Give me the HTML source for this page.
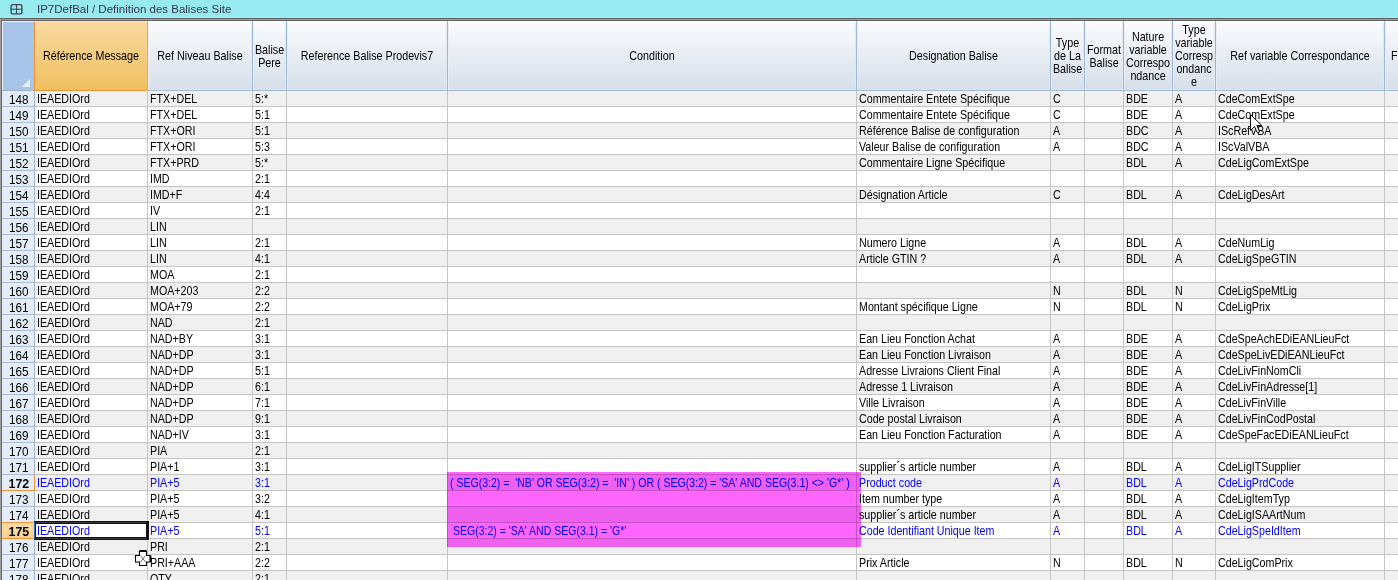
<!DOCTYPE html><html><head><meta charset="utf-8"><style>
*{margin:0;padding:0;box-sizing:border-box}
html,body{width:1398px;height:580px;overflow:hidden;background:#fff}
body{position:relative;font-family:"Liberation Sans",sans-serif;font-size:13px;color:#000}
div{position:absolute}
.t{white-space:pre;line-height:15px;height:15px;transform-origin:0 0;transform:scaleX(0.822)}
.h{white-space:nowrap;text-align:center;line-height:13px;transform:scaleX(0.825);transform-origin:50% 50%;display:flex;align-items:center;justify-content:center}
.hc{background:linear-gradient(#fafbfd,#d6dfea);box-shadow:inset 1px 0 0 #eaeef4,inset -1px 0 0 #e3e8ef,inset 0 -1px 0 #dce6ea}
.gv{width:1px;background:#c5c5c5}
.gh{height:1px;background:#c5c5c5}
.b{color:#0000ff}
</style></head><body>

<div style="left:0;top:0;width:1398px;height:18px;background:#97eaf0"></div>
<div style="left:0;top:17px;width:1398px;height:1px;background:#9cf3f8"></div>
<svg style="position:absolute;left:10px;top:4px" width="13" height="11" viewBox="0 0 13 11"><rect x="1.1" y="0.7" width="10.8" height="9.2" rx="1.6" fill="none" stroke="#3d4552" stroke-width="1.3"/><rect x="6" y="0.5" width="1" height="9.6" fill="#3d4552"/><rect x="0.6" y="4.7" width="11.8" height="1" fill="#3d4552"/></svg>
<div style="left:37px;top:-0.5px;height:18px;line-height:18px;font-size:11.5px;color:#35344a;white-space:pre;transform-origin:0 0;transform:scaleX(1.0)">IP7DefBal / Definition des Balises Site</div>
<div style="left:0;top:18px;width:1398px;height:1px;background:#5c5a5a"></div>
<div style="left:0;top:19px;width:1398px;height:561px;background:#a0a0a0"></div>
<div style="left:1px;top:20px;width:1397px;height:560px;background:#646464"></div>
<div style="left:2px;top:21px;width:1396px;height:559px;background:#fff"></div>
<div style="left:2px;top:21px;width:32px;height:69px;background:#a9c4e9;border-top:1px solid #eef4fc;border-left:1px solid #eef4fc"></div>
<div style="left:2px;top:90px;width:32px;height:1px;background:#9db3cc"></div>
<svg style="position:absolute;left:22px;top:79px" width="9" height="9"><polygon points="0,8 8,8 8,0" fill="#e9eff8"/></svg>
<div style="left:34px;top:21px;width:113px;height:69px;background:linear-gradient(#f8d9a0,#f1c060);border-left:1px solid #f29436;border-top:1px solid #fbe6bf"></div>
<div style="left:34px;top:90px;width:113px;height:1px;background:#f29436"></div>
<div style="left:147px;top:21px;width:1px;height:70px;background:#9db8d6"></div>
<div class="h" style="left:25px;top:21px;width:132px;height:69px">Référence Message</div>
<div class="hc" style="left:148px;top:21px;width:104px;height:69px;border-top:1px solid #fff"></div>
<div style="left:148px;top:90px;width:104px;height:1px;background:#a6bcd6"></div>
<div style="left:252px;top:21px;width:1px;height:70px;background:#9db8d6"></div>
<div class="h" style="left:138px;top:21px;width:124px;height:69px">Ref Niveau Balise</div>
<div class="hc" style="left:253px;top:21px;width:33px;height:69px;border-top:1px solid #fff"></div>
<div style="left:253px;top:90px;width:33px;height:1px;background:#a6bcd6"></div>
<div style="left:286px;top:21px;width:1px;height:70px;background:#9db8d6"></div>
<div class="h" style="left:243px;top:21px;width:53px;height:69px">Balise<br>Pere</div>
<div class="hc" style="left:287px;top:21px;width:160px;height:69px;border-top:1px solid #fff"></div>
<div style="left:287px;top:90px;width:160px;height:1px;background:#a6bcd6"></div>
<div style="left:447px;top:21px;width:1px;height:70px;background:#9db8d6"></div>
<div class="h" style="left:277px;top:21px;width:180px;height:69px">Reference Balise Prodevis7</div>
<div class="hc" style="left:448px;top:21px;width:408px;height:69px;border-top:1px solid #fff"></div>
<div style="left:448px;top:90px;width:408px;height:1px;background:#a6bcd6"></div>
<div style="left:856px;top:21px;width:1px;height:70px;background:#9db8d6"></div>
<div class="h" style="left:438px;top:21px;width:428px;height:69px">Condition</div>
<div class="hc" style="left:857px;top:21px;width:193px;height:69px;border-top:1px solid #fff"></div>
<div style="left:857px;top:90px;width:193px;height:1px;background:#a6bcd6"></div>
<div style="left:1050px;top:21px;width:1px;height:70px;background:#9db8d6"></div>
<div class="h" style="left:847px;top:21px;width:213px;height:69px">Designation Balise</div>
<div class="hc" style="left:1051px;top:21px;width:33px;height:69px;border-top:1px solid #fff"></div>
<div style="left:1051px;top:90px;width:33px;height:1px;background:#a6bcd6"></div>
<div style="left:1084px;top:21px;width:1px;height:70px;background:#9db8d6"></div>
<div class="h" style="left:1041px;top:21px;width:53px;height:69px">Type<br>de La<br>Balise</div>
<div class="hc" style="left:1085px;top:21px;width:38px;height:69px;border-top:1px solid #fff"></div>
<div style="left:1085px;top:90px;width:38px;height:1px;background:#a6bcd6"></div>
<div style="left:1123px;top:21px;width:1px;height:70px;background:#9db8d6"></div>
<div class="h" style="left:1075px;top:21px;width:58px;height:69px">Format<br>Balise</div>
<div class="hc" style="left:1124px;top:21px;width:48px;height:69px;border-top:1px solid #fff"></div>
<div style="left:1124px;top:90px;width:48px;height:1px;background:#a6bcd6"></div>
<div style="left:1172px;top:21px;width:1px;height:70px;background:#9db8d6"></div>
<div class="h" style="left:1114px;top:21px;width:68px;height:69px">Nature<br>variable<br>Correspo<br>ndance</div>
<div class="hc" style="left:1173px;top:21px;width:42px;height:69px;border-top:1px solid #fff"></div>
<div style="left:1173px;top:90px;width:42px;height:1px;background:#a6bcd6"></div>
<div style="left:1215px;top:21px;width:1px;height:70px;background:#9db8d6"></div>
<div class="h" style="left:1163px;top:21px;width:62px;height:69px">Type<br>variable<br>Corresp<br>ondanc<br>e</div>
<div class="hc" style="left:1216px;top:21px;width:168px;height:69px;border-top:1px solid #fff"></div>
<div style="left:1216px;top:90px;width:168px;height:1px;background:#a6bcd6"></div>
<div style="left:1384px;top:21px;width:1px;height:70px;background:#9db8d6"></div>
<div class="h" style="left:1206px;top:21px;width:188px;height:69px">Ref variable Correspondance</div>
<div class="hc" style="left:1385px;top:21px;width:115px;height:69px;border-top:1px solid #fff"></div>
<div style="left:1385px;top:90px;width:115px;height:1px;background:#a6bcd6"></div>
<div style="left:1500px;top:21px;width:1px;height:70px;background:#9db8d6"></div>
<div class="h" style="left:1375px;top:21px;width:135px;height:69px"></div>
<div class="t" style="left:1391px;top:48px">F</div>
<div style="left:35px;top:91px;width:1363px;height:15px;background:#f0f0f0"></div>
<div class="gh" style="left:35px;top:106px;width:1363px"></div>
<div style="left:2px;top:91px;width:32px;height:15px;background:#e4ecf7"></div>
<div style="left:2px;top:106px;width:32px;height:1px;background:#a9bed6"></div>
<div style="left:34px;top:91px;width:1px;height:16px;background:#9eb6ce"></div>
<div class="t" style="left:3px;top:92px;width:32px;text-align:center;transform:none;"><span style="display:inline-block;transform:scaleX(0.9)">148</span></div>
<div style="left:35px;top:107px;width:1363px;height:15px;background:#ffffff"></div>
<div class="gh" style="left:35px;top:122px;width:1363px"></div>
<div style="left:2px;top:107px;width:32px;height:15px;background:#e4ecf7"></div>
<div style="left:2px;top:122px;width:32px;height:1px;background:#a9bed6"></div>
<div style="left:34px;top:107px;width:1px;height:16px;background:#9eb6ce"></div>
<div class="t" style="left:3px;top:108px;width:32px;text-align:center;transform:none;"><span style="display:inline-block;transform:scaleX(0.9)">149</span></div>
<div style="left:35px;top:123px;width:1363px;height:15px;background:#f0f0f0"></div>
<div class="gh" style="left:35px;top:138px;width:1363px"></div>
<div style="left:2px;top:123px;width:32px;height:15px;background:#e4ecf7"></div>
<div style="left:2px;top:138px;width:32px;height:1px;background:#a9bed6"></div>
<div style="left:34px;top:123px;width:1px;height:16px;background:#9eb6ce"></div>
<div class="t" style="left:3px;top:124px;width:32px;text-align:center;transform:none;"><span style="display:inline-block;transform:scaleX(0.9)">150</span></div>
<div style="left:35px;top:139px;width:1363px;height:15px;background:#ffffff"></div>
<div class="gh" style="left:35px;top:154px;width:1363px"></div>
<div style="left:2px;top:139px;width:32px;height:15px;background:#e4ecf7"></div>
<div style="left:2px;top:154px;width:32px;height:1px;background:#a9bed6"></div>
<div style="left:34px;top:139px;width:1px;height:16px;background:#9eb6ce"></div>
<div class="t" style="left:3px;top:140px;width:32px;text-align:center;transform:none;"><span style="display:inline-block;transform:scaleX(0.9)">151</span></div>
<div style="left:35px;top:155px;width:1363px;height:15px;background:#f0f0f0"></div>
<div class="gh" style="left:35px;top:170px;width:1363px"></div>
<div style="left:2px;top:155px;width:32px;height:15px;background:#e4ecf7"></div>
<div style="left:2px;top:170px;width:32px;height:1px;background:#a9bed6"></div>
<div style="left:34px;top:155px;width:1px;height:16px;background:#9eb6ce"></div>
<div class="t" style="left:3px;top:156px;width:32px;text-align:center;transform:none;"><span style="display:inline-block;transform:scaleX(0.9)">152</span></div>
<div style="left:35px;top:171px;width:1363px;height:15px;background:#ffffff"></div>
<div class="gh" style="left:35px;top:186px;width:1363px"></div>
<div style="left:2px;top:171px;width:32px;height:15px;background:#e4ecf7"></div>
<div style="left:2px;top:186px;width:32px;height:1px;background:#a9bed6"></div>
<div style="left:34px;top:171px;width:1px;height:16px;background:#9eb6ce"></div>
<div class="t" style="left:3px;top:172px;width:32px;text-align:center;transform:none;"><span style="display:inline-block;transform:scaleX(0.9)">153</span></div>
<div style="left:35px;top:187px;width:1363px;height:15px;background:#f0f0f0"></div>
<div class="gh" style="left:35px;top:202px;width:1363px"></div>
<div style="left:2px;top:187px;width:32px;height:15px;background:#e4ecf7"></div>
<div style="left:2px;top:202px;width:32px;height:1px;background:#a9bed6"></div>
<div style="left:34px;top:187px;width:1px;height:16px;background:#9eb6ce"></div>
<div class="t" style="left:3px;top:188px;width:32px;text-align:center;transform:none;"><span style="display:inline-block;transform:scaleX(0.9)">154</span></div>
<div style="left:35px;top:203px;width:1363px;height:15px;background:#ffffff"></div>
<div class="gh" style="left:35px;top:218px;width:1363px"></div>
<div style="left:2px;top:203px;width:32px;height:15px;background:#e4ecf7"></div>
<div style="left:2px;top:218px;width:32px;height:1px;background:#a9bed6"></div>
<div style="left:34px;top:203px;width:1px;height:16px;background:#9eb6ce"></div>
<div class="t" style="left:3px;top:204px;width:32px;text-align:center;transform:none;"><span style="display:inline-block;transform:scaleX(0.9)">155</span></div>
<div style="left:35px;top:219px;width:1363px;height:15px;background:#f0f0f0"></div>
<div class="gh" style="left:35px;top:234px;width:1363px"></div>
<div style="left:2px;top:219px;width:32px;height:15px;background:#e4ecf7"></div>
<div style="left:2px;top:234px;width:32px;height:1px;background:#a9bed6"></div>
<div style="left:34px;top:219px;width:1px;height:16px;background:#9eb6ce"></div>
<div class="t" style="left:3px;top:220px;width:32px;text-align:center;transform:none;"><span style="display:inline-block;transform:scaleX(0.9)">156</span></div>
<div style="left:35px;top:235px;width:1363px;height:15px;background:#ffffff"></div>
<div class="gh" style="left:35px;top:250px;width:1363px"></div>
<div style="left:2px;top:235px;width:32px;height:15px;background:#e4ecf7"></div>
<div style="left:2px;top:250px;width:32px;height:1px;background:#a9bed6"></div>
<div style="left:34px;top:235px;width:1px;height:16px;background:#9eb6ce"></div>
<div class="t" style="left:3px;top:236px;width:32px;text-align:center;transform:none;"><span style="display:inline-block;transform:scaleX(0.9)">157</span></div>
<div style="left:35px;top:251px;width:1363px;height:15px;background:#f0f0f0"></div>
<div class="gh" style="left:35px;top:266px;width:1363px"></div>
<div style="left:2px;top:251px;width:32px;height:15px;background:#e4ecf7"></div>
<div style="left:2px;top:266px;width:32px;height:1px;background:#a9bed6"></div>
<div style="left:34px;top:251px;width:1px;height:16px;background:#9eb6ce"></div>
<div class="t" style="left:3px;top:252px;width:32px;text-align:center;transform:none;"><span style="display:inline-block;transform:scaleX(0.9)">158</span></div>
<div style="left:35px;top:267px;width:1363px;height:15px;background:#ffffff"></div>
<div class="gh" style="left:35px;top:282px;width:1363px"></div>
<div style="left:2px;top:267px;width:32px;height:15px;background:#e4ecf7"></div>
<div style="left:2px;top:282px;width:32px;height:1px;background:#a9bed6"></div>
<div style="left:34px;top:267px;width:1px;height:16px;background:#9eb6ce"></div>
<div class="t" style="left:3px;top:268px;width:32px;text-align:center;transform:none;"><span style="display:inline-block;transform:scaleX(0.9)">159</span></div>
<div style="left:35px;top:283px;width:1363px;height:15px;background:#f0f0f0"></div>
<div class="gh" style="left:35px;top:298px;width:1363px"></div>
<div style="left:2px;top:283px;width:32px;height:15px;background:#e4ecf7"></div>
<div style="left:2px;top:298px;width:32px;height:1px;background:#a9bed6"></div>
<div style="left:34px;top:283px;width:1px;height:16px;background:#9eb6ce"></div>
<div class="t" style="left:3px;top:284px;width:32px;text-align:center;transform:none;"><span style="display:inline-block;transform:scaleX(0.9)">160</span></div>
<div style="left:35px;top:299px;width:1363px;height:15px;background:#ffffff"></div>
<div class="gh" style="left:35px;top:314px;width:1363px"></div>
<div style="left:2px;top:299px;width:32px;height:15px;background:#e4ecf7"></div>
<div style="left:2px;top:314px;width:32px;height:1px;background:#a9bed6"></div>
<div style="left:34px;top:299px;width:1px;height:16px;background:#9eb6ce"></div>
<div class="t" style="left:3px;top:300px;width:32px;text-align:center;transform:none;"><span style="display:inline-block;transform:scaleX(0.9)">161</span></div>
<div style="left:35px;top:315px;width:1363px;height:15px;background:#f0f0f0"></div>
<div class="gh" style="left:35px;top:330px;width:1363px"></div>
<div style="left:2px;top:315px;width:32px;height:15px;background:#e4ecf7"></div>
<div style="left:2px;top:330px;width:32px;height:1px;background:#a9bed6"></div>
<div style="left:34px;top:315px;width:1px;height:16px;background:#9eb6ce"></div>
<div class="t" style="left:3px;top:316px;width:32px;text-align:center;transform:none;"><span style="display:inline-block;transform:scaleX(0.9)">162</span></div>
<div style="left:35px;top:331px;width:1363px;height:15px;background:#ffffff"></div>
<div class="gh" style="left:35px;top:346px;width:1363px"></div>
<div style="left:2px;top:331px;width:32px;height:15px;background:#e4ecf7"></div>
<div style="left:2px;top:346px;width:32px;height:1px;background:#a9bed6"></div>
<div style="left:34px;top:331px;width:1px;height:16px;background:#9eb6ce"></div>
<div class="t" style="left:3px;top:332px;width:32px;text-align:center;transform:none;"><span style="display:inline-block;transform:scaleX(0.9)">163</span></div>
<div style="left:35px;top:347px;width:1363px;height:15px;background:#f0f0f0"></div>
<div class="gh" style="left:35px;top:362px;width:1363px"></div>
<div style="left:2px;top:347px;width:32px;height:15px;background:#e4ecf7"></div>
<div style="left:2px;top:362px;width:32px;height:1px;background:#a9bed6"></div>
<div style="left:34px;top:347px;width:1px;height:16px;background:#9eb6ce"></div>
<div class="t" style="left:3px;top:348px;width:32px;text-align:center;transform:none;"><span style="display:inline-block;transform:scaleX(0.9)">164</span></div>
<div style="left:35px;top:363px;width:1363px;height:15px;background:#ffffff"></div>
<div class="gh" style="left:35px;top:378px;width:1363px"></div>
<div style="left:2px;top:363px;width:32px;height:15px;background:#e4ecf7"></div>
<div style="left:2px;top:378px;width:32px;height:1px;background:#a9bed6"></div>
<div style="left:34px;top:363px;width:1px;height:16px;background:#9eb6ce"></div>
<div class="t" style="left:3px;top:364px;width:32px;text-align:center;transform:none;"><span style="display:inline-block;transform:scaleX(0.9)">165</span></div>
<div style="left:35px;top:379px;width:1363px;height:15px;background:#f0f0f0"></div>
<div class="gh" style="left:35px;top:394px;width:1363px"></div>
<div style="left:2px;top:379px;width:32px;height:15px;background:#e4ecf7"></div>
<div style="left:2px;top:394px;width:32px;height:1px;background:#a9bed6"></div>
<div style="left:34px;top:379px;width:1px;height:16px;background:#9eb6ce"></div>
<div class="t" style="left:3px;top:380px;width:32px;text-align:center;transform:none;"><span style="display:inline-block;transform:scaleX(0.9)">166</span></div>
<div style="left:35px;top:395px;width:1363px;height:15px;background:#ffffff"></div>
<div class="gh" style="left:35px;top:410px;width:1363px"></div>
<div style="left:2px;top:395px;width:32px;height:15px;background:#e4ecf7"></div>
<div style="left:2px;top:410px;width:32px;height:1px;background:#a9bed6"></div>
<div style="left:34px;top:395px;width:1px;height:16px;background:#9eb6ce"></div>
<div class="t" style="left:3px;top:396px;width:32px;text-align:center;transform:none;"><span style="display:inline-block;transform:scaleX(0.9)">167</span></div>
<div style="left:35px;top:411px;width:1363px;height:15px;background:#f0f0f0"></div>
<div class="gh" style="left:35px;top:426px;width:1363px"></div>
<div style="left:2px;top:411px;width:32px;height:15px;background:#e4ecf7"></div>
<div style="left:2px;top:426px;width:32px;height:1px;background:#a9bed6"></div>
<div style="left:34px;top:411px;width:1px;height:16px;background:#9eb6ce"></div>
<div class="t" style="left:3px;top:412px;width:32px;text-align:center;transform:none;"><span style="display:inline-block;transform:scaleX(0.9)">168</span></div>
<div style="left:35px;top:427px;width:1363px;height:15px;background:#ffffff"></div>
<div class="gh" style="left:35px;top:442px;width:1363px"></div>
<div style="left:2px;top:427px;width:32px;height:15px;background:#e4ecf7"></div>
<div style="left:2px;top:442px;width:32px;height:1px;background:#a9bed6"></div>
<div style="left:34px;top:427px;width:1px;height:16px;background:#9eb6ce"></div>
<div class="t" style="left:3px;top:428px;width:32px;text-align:center;transform:none;"><span style="display:inline-block;transform:scaleX(0.9)">169</span></div>
<div style="left:35px;top:443px;width:1363px;height:15px;background:#f0f0f0"></div>
<div class="gh" style="left:35px;top:458px;width:1363px"></div>
<div style="left:2px;top:443px;width:32px;height:15px;background:#e4ecf7"></div>
<div style="left:2px;top:458px;width:32px;height:1px;background:#a9bed6"></div>
<div style="left:34px;top:443px;width:1px;height:16px;background:#9eb6ce"></div>
<div class="t" style="left:3px;top:444px;width:32px;text-align:center;transform:none;"><span style="display:inline-block;transform:scaleX(0.9)">170</span></div>
<div style="left:35px;top:459px;width:1363px;height:15px;background:#ffffff"></div>
<div class="gh" style="left:35px;top:474px;width:1363px"></div>
<div style="left:2px;top:459px;width:32px;height:15px;background:#e4ecf7"></div>
<div style="left:2px;top:474px;width:32px;height:1px;background:#a9bed6"></div>
<div style="left:34px;top:459px;width:1px;height:16px;background:#9eb6ce"></div>
<div class="t" style="left:3px;top:460px;width:32px;text-align:center;transform:none;"><span style="display:inline-block;transform:scaleX(0.9)">171</span></div>
<div style="left:35px;top:475px;width:1363px;height:15px;background:#f0f0f0"></div>
<div class="gh" style="left:35px;top:490px;width:1363px"></div>
<div style="left:2px;top:475px;width:32px;height:15px;background:#e4ecf7"></div>
<div style="left:2px;top:490px;width:32px;height:1px;background:#f29436"></div>
<div style="left:34px;top:475px;width:1px;height:16px;background:#f29436"></div>
<div class="t" style="left:3px;top:476px;width:32px;text-align:center;transform:none;font-weight:bold;"><span style="display:inline-block;transform:scaleX(0.95)">172</span></div>
<div style="left:35px;top:491px;width:1363px;height:15px;background:#ffffff"></div>
<div class="gh" style="left:35px;top:506px;width:1363px"></div>
<div style="left:2px;top:491px;width:32px;height:15px;background:#e4ecf7"></div>
<div style="left:2px;top:506px;width:32px;height:1px;background:#a9bed6"></div>
<div style="left:34px;top:491px;width:1px;height:16px;background:#9eb6ce"></div>
<div class="t" style="left:3px;top:492px;width:32px;text-align:center;transform:none;"><span style="display:inline-block;transform:scaleX(0.9)">173</span></div>
<div style="left:35px;top:507px;width:1363px;height:15px;background:#f0f0f0"></div>
<div class="gh" style="left:35px;top:522px;width:1363px"></div>
<div style="left:2px;top:507px;width:32px;height:15px;background:#e4ecf7"></div>
<div style="left:2px;top:522px;width:32px;height:1px;background:#f29436"></div>
<div style="left:34px;top:507px;width:1px;height:16px;background:#9eb6ce"></div>
<div class="t" style="left:3px;top:508px;width:32px;text-align:center;transform:none;"><span style="display:inline-block;transform:scaleX(0.9)">174</span></div>
<div style="left:35px;top:523px;width:1363px;height:15px;background:#ffffff"></div>
<div class="gh" style="left:35px;top:538px;width:1363px"></div>
<div style="left:2px;top:523px;width:32px;height:15px;background:linear-gradient(#fadba6,#f8d192)"></div>
<div style="left:2px;top:538px;width:32px;height:1px;background:#f29436"></div>
<div style="left:34px;top:523px;width:1px;height:16px;background:#f29436"></div>
<div class="t" style="left:3px;top:524px;width:32px;text-align:center;transform:none;font-weight:bold;"><span style="display:inline-block;transform:scaleX(0.95)">175</span></div>
<div style="left:35px;top:539px;width:1363px;height:15px;background:#f0f0f0"></div>
<div class="gh" style="left:35px;top:554px;width:1363px"></div>
<div style="left:2px;top:539px;width:32px;height:15px;background:#e4ecf7"></div>
<div style="left:2px;top:554px;width:32px;height:1px;background:#a9bed6"></div>
<div style="left:34px;top:539px;width:1px;height:16px;background:#9eb6ce"></div>
<div class="t" style="left:3px;top:540px;width:32px;text-align:center;transform:none;"><span style="display:inline-block;transform:scaleX(0.9)">176</span></div>
<div style="left:35px;top:555px;width:1363px;height:15px;background:#ffffff"></div>
<div class="gh" style="left:35px;top:570px;width:1363px"></div>
<div style="left:2px;top:555px;width:32px;height:15px;background:#e4ecf7"></div>
<div style="left:2px;top:570px;width:32px;height:1px;background:#a9bed6"></div>
<div style="left:34px;top:555px;width:1px;height:16px;background:#9eb6ce"></div>
<div class="t" style="left:3px;top:556px;width:32px;text-align:center;transform:none;"><span style="display:inline-block;transform:scaleX(0.9)">177</span></div>
<div style="left:35px;top:571px;width:1363px;height:15px;background:#f0f0f0"></div>
<div class="gh" style="left:35px;top:586px;width:1363px"></div>
<div style="left:2px;top:571px;width:32px;height:15px;background:#e4ecf7"></div>
<div style="left:2px;top:586px;width:32px;height:1px;background:#a9bed6"></div>
<div style="left:34px;top:571px;width:1px;height:16px;background:#9eb6ce"></div>
<div class="t" style="left:3px;top:572px;width:32px;text-align:center;transform:none;"><span style="display:inline-block;transform:scaleX(0.9)">178</span></div>
<div class="gv" style="left:147px;top:91px;height:489px"></div>
<div class="gv" style="left:252px;top:91px;height:489px"></div>
<div class="gv" style="left:286px;top:91px;height:489px"></div>
<div class="gv" style="left:447px;top:91px;height:489px"></div>
<div class="gv" style="left:856px;top:91px;height:489px"></div>
<div class="gv" style="left:1050px;top:91px;height:489px"></div>
<div class="gv" style="left:1084px;top:91px;height:489px"></div>
<div class="gv" style="left:1123px;top:91px;height:489px"></div>
<div class="gv" style="left:1172px;top:91px;height:489px"></div>
<div class="gv" style="left:1215px;top:91px;height:489px"></div>
<div class="gv" style="left:1384px;top:91px;height:489px"></div>
<div style="left:447px;top:472px;width:414px;height:75px;background:#ff66ff;mix-blend-mode:multiply"></div>
<div class="t" style="left:37px;top:91px;">IEAEDIOrd</div>
<div class="t" style="left:150px;top:91px;">FTX+DEL</div>
<div class="t" style="left:255px;top:91px;">5:*</div>
<div class="t" style="left:859px;top:91px;">Commentaire Entete Spécifique</div>
<div class="t" style="left:1053px;top:91px;">C</div>
<div class="t" style="left:1126px;top:91px;">BDE</div>
<div class="t" style="left:1175px;top:91px;">A</div>
<div class="t" style="left:1218px;top:91px;">CdeComExtSpe</div>
<div class="t" style="left:37px;top:107px;">IEAEDIOrd</div>
<div class="t" style="left:150px;top:107px;">FTX+DEL</div>
<div class="t" style="left:255px;top:107px;">5:1</div>
<div class="t" style="left:859px;top:107px;">Commentaire Entete Spécifique</div>
<div class="t" style="left:1053px;top:107px;">C</div>
<div class="t" style="left:1126px;top:107px;">BDE</div>
<div class="t" style="left:1175px;top:107px;">A</div>
<div class="t" style="left:1218px;top:107px;">CdeComExtSpe</div>
<div class="t" style="left:37px;top:123px;">IEAEDIOrd</div>
<div class="t" style="left:150px;top:123px;">FTX+ORI</div>
<div class="t" style="left:255px;top:123px;">5:1</div>
<div class="t" style="left:859px;top:123px;">Référence Balise de configuration</div>
<div class="t" style="left:1053px;top:123px;">A</div>
<div class="t" style="left:1126px;top:123px;">BDC</div>
<div class="t" style="left:1175px;top:123px;">A</div>
<div class="t" style="left:1218px;top:123px;">IScRefVBA</div>
<div class="t" style="left:37px;top:139px;">IEAEDIOrd</div>
<div class="t" style="left:150px;top:139px;">FTX+ORI</div>
<div class="t" style="left:255px;top:139px;">5:3</div>
<div class="t" style="left:859px;top:139px;">Valeur Balise de configuration</div>
<div class="t" style="left:1053px;top:139px;">A</div>
<div class="t" style="left:1126px;top:139px;">BDC</div>
<div class="t" style="left:1175px;top:139px;">A</div>
<div class="t" style="left:1218px;top:139px;">IScValVBA</div>
<div class="t" style="left:37px;top:155px;">IEAEDIOrd</div>
<div class="t" style="left:150px;top:155px;">FTX+PRD</div>
<div class="t" style="left:255px;top:155px;">5:*</div>
<div class="t" style="left:859px;top:155px;">Commentaire Ligne Spécifique</div>
<div class="t" style="left:1126px;top:155px;">BDL</div>
<div class="t" style="left:1175px;top:155px;">A</div>
<div class="t" style="left:1218px;top:155px;">CdeLigComExtSpe</div>
<div class="t" style="left:37px;top:171px;">IEAEDIOrd</div>
<div class="t" style="left:150px;top:171px;">IMD</div>
<div class="t" style="left:255px;top:171px;">2:1</div>
<div class="t" style="left:37px;top:187px;">IEAEDIOrd</div>
<div class="t" style="left:150px;top:187px;">IMD+F</div>
<div class="t" style="left:255px;top:187px;">4:4</div>
<div class="t" style="left:859px;top:187px;">Désignation Article</div>
<div class="t" style="left:1053px;top:187px;">C</div>
<div class="t" style="left:1126px;top:187px;">BDL</div>
<div class="t" style="left:1175px;top:187px;">A</div>
<div class="t" style="left:1218px;top:187px;">CdeLigDesArt</div>
<div class="t" style="left:37px;top:203px;">IEAEDIOrd</div>
<div class="t" style="left:150px;top:203px;">IV</div>
<div class="t" style="left:255px;top:203px;">2:1</div>
<div class="t" style="left:37px;top:219px;">IEAEDIOrd</div>
<div class="t" style="left:150px;top:219px;">LIN</div>
<div class="t" style="left:37px;top:235px;">IEAEDIOrd</div>
<div class="t" style="left:150px;top:235px;">LIN</div>
<div class="t" style="left:255px;top:235px;">2:1</div>
<div class="t" style="left:859px;top:235px;">Numero Ligne</div>
<div class="t" style="left:1053px;top:235px;">A</div>
<div class="t" style="left:1126px;top:235px;">BDL</div>
<div class="t" style="left:1175px;top:235px;">A</div>
<div class="t" style="left:1218px;top:235px;">CdeNumLig</div>
<div class="t" style="left:37px;top:251px;">IEAEDIOrd</div>
<div class="t" style="left:150px;top:251px;">LIN</div>
<div class="t" style="left:255px;top:251px;">4:1</div>
<div class="t" style="left:859px;top:251px;">Article GTIN ?</div>
<div class="t" style="left:1053px;top:251px;">A</div>
<div class="t" style="left:1126px;top:251px;">BDL</div>
<div class="t" style="left:1175px;top:251px;">A</div>
<div class="t" style="left:1218px;top:251px;">CdeLigSpeGTIN</div>
<div class="t" style="left:37px;top:267px;">IEAEDIOrd</div>
<div class="t" style="left:150px;top:267px;">MOA</div>
<div class="t" style="left:255px;top:267px;">2:1</div>
<div class="t" style="left:37px;top:283px;">IEAEDIOrd</div>
<div class="t" style="left:150px;top:283px;">MOA+203</div>
<div class="t" style="left:255px;top:283px;">2:2</div>
<div class="t" style="left:1053px;top:283px;">N</div>
<div class="t" style="left:1126px;top:283px;">BDL</div>
<div class="t" style="left:1175px;top:283px;">N</div>
<div class="t" style="left:1218px;top:283px;">CdeLigSpeMtLig</div>
<div class="t" style="left:37px;top:299px;">IEAEDIOrd</div>
<div class="t" style="left:150px;top:299px;">MOA+79</div>
<div class="t" style="left:255px;top:299px;">2:2</div>
<div class="t" style="left:859px;top:299px;">Montant spécifique Ligne</div>
<div class="t" style="left:1053px;top:299px;">N</div>
<div class="t" style="left:1126px;top:299px;">BDL</div>
<div class="t" style="left:1175px;top:299px;">N</div>
<div class="t" style="left:1218px;top:299px;">CdeLigPrix</div>
<div class="t" style="left:37px;top:315px;">IEAEDIOrd</div>
<div class="t" style="left:150px;top:315px;">NAD</div>
<div class="t" style="left:255px;top:315px;">2:1</div>
<div class="t" style="left:37px;top:331px;">IEAEDIOrd</div>
<div class="t" style="left:150px;top:331px;">NAD+BY</div>
<div class="t" style="left:255px;top:331px;">3:1</div>
<div class="t" style="left:859px;top:331px;">Ean Lieu Fonction Achat</div>
<div class="t" style="left:1053px;top:331px;">A</div>
<div class="t" style="left:1126px;top:331px;">BDE</div>
<div class="t" style="left:1175px;top:331px;">A</div>
<div class="t" style="left:1218px;top:331px;">CdeSpeAchEDiEANLieuFct</div>
<div class="t" style="left:37px;top:347px;">IEAEDIOrd</div>
<div class="t" style="left:150px;top:347px;">NAD+DP</div>
<div class="t" style="left:255px;top:347px;">3:1</div>
<div class="t" style="left:859px;top:347px;">Ean Lieu Fonction Livraison</div>
<div class="t" style="left:1053px;top:347px;">A</div>
<div class="t" style="left:1126px;top:347px;">BDE</div>
<div class="t" style="left:1175px;top:347px;">A</div>
<div class="t" style="left:1218px;top:347px;">CdeSpeLivEDiEANLieuFct</div>
<div class="t" style="left:37px;top:363px;">IEAEDIOrd</div>
<div class="t" style="left:150px;top:363px;">NAD+DP</div>
<div class="t" style="left:255px;top:363px;">5:1</div>
<div class="t" style="left:859px;top:363px;">Adresse Livraions Client Final</div>
<div class="t" style="left:1053px;top:363px;">A</div>
<div class="t" style="left:1126px;top:363px;">BDE</div>
<div class="t" style="left:1175px;top:363px;">A</div>
<div class="t" style="left:1218px;top:363px;">CdeLivFinNomCli</div>
<div class="t" style="left:37px;top:379px;">IEAEDIOrd</div>
<div class="t" style="left:150px;top:379px;">NAD+DP</div>
<div class="t" style="left:255px;top:379px;">6:1</div>
<div class="t" style="left:859px;top:379px;">Adresse 1 Livraison</div>
<div class="t" style="left:1053px;top:379px;">A</div>
<div class="t" style="left:1126px;top:379px;">BDE</div>
<div class="t" style="left:1175px;top:379px;">A</div>
<div class="t" style="left:1218px;top:379px;">CdeLivFinAdresse[1]</div>
<div class="t" style="left:37px;top:395px;">IEAEDIOrd</div>
<div class="t" style="left:150px;top:395px;">NAD+DP</div>
<div class="t" style="left:255px;top:395px;">7:1</div>
<div class="t" style="left:859px;top:395px;">Ville Livraison</div>
<div class="t" style="left:1053px;top:395px;">A</div>
<div class="t" style="left:1126px;top:395px;">BDE</div>
<div class="t" style="left:1175px;top:395px;">A</div>
<div class="t" style="left:1218px;top:395px;">CdeLivFinVille</div>
<div class="t" style="left:37px;top:411px;">IEAEDIOrd</div>
<div class="t" style="left:150px;top:411px;">NAD+DP</div>
<div class="t" style="left:255px;top:411px;">9:1</div>
<div class="t" style="left:859px;top:411px;">Code postal Livraison</div>
<div class="t" style="left:1053px;top:411px;">A</div>
<div class="t" style="left:1126px;top:411px;">BDE</div>
<div class="t" style="left:1175px;top:411px;">A</div>
<div class="t" style="left:1218px;top:411px;">CdeLivFinCodPostal</div>
<div class="t" style="left:37px;top:427px;">IEAEDIOrd</div>
<div class="t" style="left:150px;top:427px;">NAD+IV</div>
<div class="t" style="left:255px;top:427px;">3:1</div>
<div class="t" style="left:859px;top:427px;">Ean Lieu Fonction Facturation</div>
<div class="t" style="left:1053px;top:427px;">A</div>
<div class="t" style="left:1126px;top:427px;">BDE</div>
<div class="t" style="left:1175px;top:427px;">A</div>
<div class="t" style="left:1218px;top:427px;">CdeSpeFacEDiEANLieuFct</div>
<div class="t" style="left:37px;top:443px;">IEAEDIOrd</div>
<div class="t" style="left:150px;top:443px;">PIA</div>
<div class="t" style="left:255px;top:443px;">2:1</div>
<div class="t" style="left:37px;top:459px;">IEAEDIOrd</div>
<div class="t" style="left:150px;top:459px;">PIA+1</div>
<div class="t" style="left:255px;top:459px;">3:1</div>
<div class="t" style="left:859px;top:459px;">supplier´s article number</div>
<div class="t" style="left:1053px;top:459px;">A</div>
<div class="t" style="left:1126px;top:459px;">BDL</div>
<div class="t" style="left:1175px;top:459px;">A</div>
<div class="t" style="left:1218px;top:459px;">CdeLigITSupplier</div>
<div class="t b" style="left:37px;top:475px;">IEAEDIOrd</div>
<div class="t b" style="left:150px;top:475px;">PIA+5</div>
<div class="t b" style="left:255px;top:475px;">3:1</div>
<div class="t b" style="left:450px;top:475px;transform:scaleX(0.81);">( SEG(3:2) =  &#x27;NB&#x27; OR SEG(3:2) =  &#x27;IN&#x27; ) OR ( SEG(3:2) = &#x27;SA&#x27; AND SEG(3.1) &lt;&gt; &#x27;G*&#x27; )</div>
<div class="t b" style="left:859px;top:475px;">Product code</div>
<div class="t b" style="left:1053px;top:475px;">A</div>
<div class="t b" style="left:1126px;top:475px;">BDL</div>
<div class="t b" style="left:1175px;top:475px;">A</div>
<div class="t b" style="left:1218px;top:475px;">CdeLigPrdCode</div>
<div class="t" style="left:37px;top:491px;">IEAEDIOrd</div>
<div class="t" style="left:150px;top:491px;">PIA+5</div>
<div class="t" style="left:255px;top:491px;">3:2</div>
<div class="t" style="left:859px;top:491px;">Item number type</div>
<div class="t" style="left:1053px;top:491px;">A</div>
<div class="t" style="left:1126px;top:491px;">BDL</div>
<div class="t" style="left:1175px;top:491px;">A</div>
<div class="t" style="left:1218px;top:491px;">CdeLigItemTyp</div>
<div class="t" style="left:37px;top:507px;">IEAEDIOrd</div>
<div class="t" style="left:150px;top:507px;">PIA+5</div>
<div class="t" style="left:255px;top:507px;">4:1</div>
<div class="t" style="left:859px;top:507px;">supplier´s article number</div>
<div class="t" style="left:1053px;top:507px;">A</div>
<div class="t" style="left:1126px;top:507px;">BDL</div>
<div class="t" style="left:1175px;top:507px;">A</div>
<div class="t" style="left:1218px;top:507px;">CdeLigISAArtNum</div>
<div class="t b" style="left:37px;top:523px;">IEAEDIOrd</div>
<div class="t b" style="left:150px;top:523px;">PIA+5</div>
<div class="t b" style="left:255px;top:523px;">5:1</div>
<div class="t b" style="left:453px;top:523px;transform:scaleX(0.808);">SEG(3:2) = &#x27;SA&#x27; AND SEG(3.1) = &#x27;G*&#x27;</div>
<div class="t b" style="left:859px;top:523px;">Code Identifiant Unique Item</div>
<div class="t b" style="left:1053px;top:523px;">A</div>
<div class="t b" style="left:1126px;top:523px;">BDL</div>
<div class="t b" style="left:1175px;top:523px;">A</div>
<div class="t b" style="left:1218px;top:523px;">CdeLigSpeIdItem</div>
<div class="t" style="left:37px;top:539px;">IEAEDIOrd</div>
<div class="t" style="left:150px;top:539px;">PRI</div>
<div class="t" style="left:255px;top:539px;">2:1</div>
<div class="t" style="left:37px;top:555px;">IEAEDIOrd</div>
<div class="t" style="left:150px;top:555px;">PRI+AAA</div>
<div class="t" style="left:255px;top:555px;">2:2</div>
<div class="t" style="left:859px;top:555px;">Prix Article</div>
<div class="t" style="left:1053px;top:555px;">N</div>
<div class="t" style="left:1126px;top:555px;">BDL</div>
<div class="t" style="left:1175px;top:555px;">N</div>
<div class="t" style="left:1218px;top:555px;">CdeLigComPrix</div>
<div class="t" style="left:37px;top:571px;">IEAEDIOrd</div>
<div class="t" style="left:150px;top:571px;">QTY</div>
<div class="t" style="left:255px;top:571px;">2:1</div>
<div style="left:34px;top:521px;width:115px;height:19px;border:3px solid #111;border-left:2px solid #111"></div>
<div style="left:34px;top:522px;width:1px;height:17px;background:#1f6fcf"></div>
<div style="left:36px;top:522px;width:110px;height:1px;background:#3a3a3a"></div>
<div style="left:36px;top:538px;width:110px;height:1px;background:#3a3a3a"></div>
<svg style="position:absolute;left:1250px;top:114px" width="14" height="20" viewBox="0 0 14 20"><path d="M0.5,0.5 L0.5,16.5 L4.5,12.5 L7.3,18.8 L9.6,17.8 L6.9,11.5 L11.8,11.5 Z" fill="#fff" stroke="#111" stroke-width="1" stroke-linejoin="miter"/></svg>
<svg style="position:absolute;left:134px;top:549px" width="18" height="18" viewBox="0 0 18 18"><path d="M5.5,2.5 L12.5,2.5 L12.5,6.5 L16,6.5 L16,13 L12.5,13 L12.5,16.5 L5.5,16.5 L5.5,13 L1.5,13 L1.5,6.5 L5.5,6.5 Z" fill="#fff" stroke="#000" stroke-width="1.1"/><path d="M5.5,1.7 L12.5,1.7 M16.8,6.5 L16.8,13" stroke="#000" stroke-width="1.3"/><path d="M6.5,6.5 L11.5,13 M11.5,6.5 L6.5,13" stroke="#333" stroke-width="0.7"/></svg>
</body></html>
